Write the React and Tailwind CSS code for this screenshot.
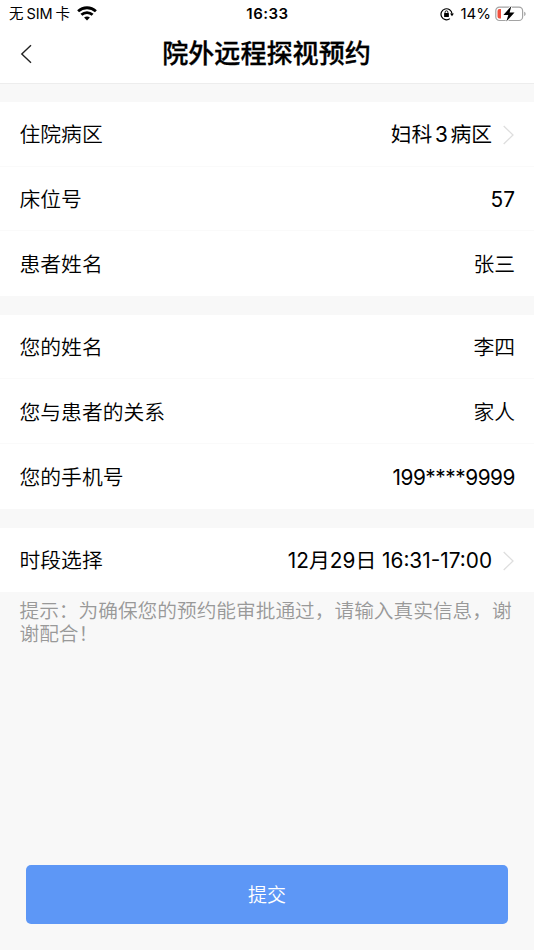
const wardRows = [
    { label: "住院病区", value: "妇科 3 病区", link: true, spacing: "font-normal [word-spacing:-3.2px]" },
    { label: "床位号", value: "57", spacing: "font-normal" },
    { label: "患者姓名", value: "张三" },
];

const visitorRows = [
    { label: "您的姓名", value: "李四" },
    { label: "您与患者的关系", value: "家人" },
    { label: "您的手机号", value: "199****9999", spacing: "font-normal tracking-[-0.45px]" },
];

const timeRows = [
    { label: "时段选择", value: "12月29日 16:31-17:00", link: true, spacing: "font-normal" },
];

const WifiIcon = () => (
    <svg width="20" height="15" viewBox="0 0 20 15" fill="none" stroke="#000" strokeWidth="2.8">
        <path d="M1.1 5.2C6.2.6 13.8.6 18.9 5.2" />
        <path d="M4.4 8.8c3.2-3 8-3 11.2 0" />
        <path d="M10 14.5 7.1 11.6c1.7-1.5 4.1-1.5 5.8 0z" fill="#000" stroke="none" />
    </svg>
);

const RotationLockIcon = () => (
    <svg width="14" height="14" viewBox="0 0 14 14" fill="none" stroke="#000">
        <path d="M9.9 11.6A5.5 5.5 0 1 1 12 6.8" strokeWidth="1.2" />
        <path d="M10 6.4h3.9l-1.9 2.8z" fill="#000" stroke="none" />
        <rect x="4.1" y="6.1" width="4.8" height="3.8" rx="0.5" fill="#000" stroke="none" />
        <path d="M5.1 6.3V5.2a1.4 1.4 0 0 1 2.8 0v1.1" strokeWidth="0.9" />
    </svg>
);

const BatteryIcon = () => (
    <svg width="32" height="16" viewBox="0 0 32 16" fill="none">
        <rect x="0.8" y="1.1" width="26.8" height="13.4" rx="3.6" stroke="#a3a3a3" strokeWidth="1.2" />
        <path d="M29.2 5.7v4.4c1.9-.6 1.9-3.8 0-4.4z" fill="#a3a3a3" />
        <path d="M4.4 3.1h1.6v9.4H4.4A1.9 1.9 0 0 1 2.5 10.6V5a1.9 1.9 0 0 1 1.9-1.9z" fill="#f1503f" />
        <path
            d="M16.4 0 8.4 8.9h4.9l-2 6.7 8.2-9h-4.9z"
            fill="#000"
            stroke="#fff"
            strokeWidth="1.8"
            paintOrder="stroke"
        />
    </svg>
);

const RowArrow = () => (
    <svg className="ml-[11px] mr-px shrink-0" width="11" height="20" viewBox="0 0 11 20" fill="none">
        <path d="M.7 1 10 10 .7 19" stroke="#dedede" strokeWidth="1.3" />
    </svg>
);

const StatusBar = () => (
    <div className="grid h-7 grid-cols-3 items-center pl-[9px] pr-[7px] text-[15px]">
        <div className="flex items-center">
            <span className="text-[14.5px] font-normal whitespace-nowrap [word-spacing:-1.2px]">
                无 SIM 卡
            </span>
            <span className="ml-[7px] -mt-0.5">
                <WifiIcon />
            </span>
        </div>
        <div className="-ml-px text-center font-semibold tracking-[0.5px]">16:33</div>
        <div className="flex items-center justify-end">
            <RotationLockIcon />
            <span className="ml-1.5 mr-1 font-normal">14%</span>
            <BatteryIcon />
        </div>
    </div>
);

const FormRow = ({ label, value, link, spacing }) => (
    <div className="flex h-[64.6px] items-center justify-between border-b border-[#fafafa] pt-0.5 pl-[19.5px] pr-[19px] text-[20.8px] last:border-b-0">
        <span>{label}</span>
        <span className="flex items-center whitespace-nowrap">
            <span className={spacing}>{value}</span>
            {link && <RowArrow />}
        </span>
    </div>
);

const FormGroup = ({ rows }) => (
    <div className="bg-white">
        {rows.map((row) => (
            <FormRow key={row.label} {...row} />
        ))}
    </div>
);

export default function App() {
    return (
        <div className="flex h-[950px] w-[534px] flex-col bg-[#f8f8f8] font-[Inter,'Noto_Sans_CJK_SC',sans-serif] font-[350] text-black">
            <header className="h-[83.5px] border-b border-[#ededed] bg-white">
                <StatusBar />
                <div className="grid h-[52px] grid-cols-[80px_1fr_80px] items-center">
                    <button className="pl-5" aria-label="返回">
                        <svg width="13" height="20" viewBox="0 0 13 20" fill="none">
                            <path d="M11 1.2 1.8 10l9.2 8.8" stroke="#222" strokeWidth="1.4" />
                        </svg>
                    </button>
                    <h1 className="-ml-px text-center text-[26.1px] font-medium [-webkit-text-stroke:0.3px]">
                        院外远程探视预约
                    </h1>
                </div>
            </header>

            <main className="flex flex-col gap-[19px] pt-[18.5px]">
                <FormGroup rows={wardRows} />
                <FormGroup rows={visitorRows} />
                <FormGroup rows={timeRows} />
            </main>

            <p className="mt-2 pl-[19.5px] pr-4 text-[19.7px] leading-[23px] text-[#999]">
                提示：为确保您的预约能审批通过，请输入真实信息，谢谢配合！
            </p>

            <button className="mx-[26px] mt-auto mb-[26px] h-[59px] rounded-[5px] bg-[#5d97f6] pt-[3px] text-[19px] text-white">
                提交
            </button>
        </div>
    );
}
